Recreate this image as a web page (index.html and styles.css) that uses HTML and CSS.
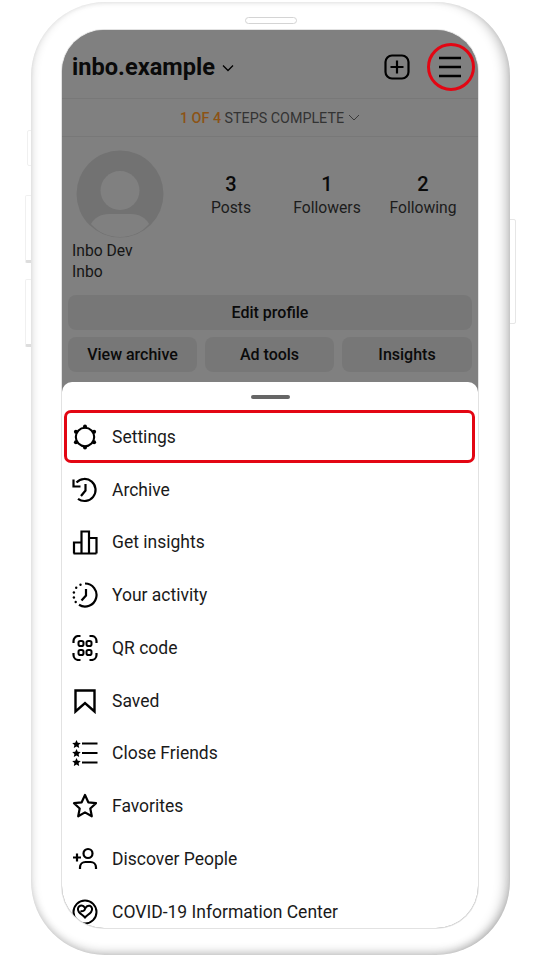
FILE: index.html
```html
<!DOCTYPE html>
<html lang="en">
<head>
    <meta charset="UTF-8">
    <meta name="viewport" content="width=device-width, initial-scale=1.0">
    <title>Profile menu</title>
    <link rel="stylesheet" href="styles.css">
</head>
<body>
    <div class="phone">
        <span class="side-btn mute"></span>
        <span class="side-btn vol-up"></span>
        <span class="side-btn vol-down"></span>
        <span class="side-btn power"></span>
        <span class="speaker"></span>

        <div class="screen">
            <div class="profile">
                <div class="topbar">
                    <div class="username">inbo.example
                        <svg class="caret" width="14" height="8" viewBox="0 0 14 8"><path d="M2 1.500l5 5 5-5" fill="none" stroke="#000" stroke-width="1.300"/></svg>
                    </div>
                    <div class="topbar-icons">
                        <svg width="28" height="28" viewBox="0 0 28 28" fill="none" stroke="#000" stroke-width="2.200">
                            <rect x="2.500" y="2.500" width="23" height="23" rx="6.500"/>
                            <path d="M14 7.500v13M7.500 14h13"/>
                        </svg>
                        <svg class="burger" width="24" height="22" viewBox="0 0 24 22" fill="none" stroke="#000" stroke-width="2.400">
                            <path d="M1 2h22M1 11h22M1 20h22"/>
                        </svg>
                    </div>
                </div>

                <div class="steps">
                    <span><span class="steps-done">1 OF 4</span> STEPS COMPLETE</span>
                    <svg width="12" height="7" viewBox="0 0 12 7"><path d="M1 1l5 5 5-5" fill="none" stroke="#3a3a3a" stroke-width="1"/></svg>
                </div>

                <div class="summary">
                    <svg class="avatar" width="88" height="88" viewBox="0 0 88 88">
                        <circle cx="44" cy="44" r="43.500" fill="#727272"/>
                        <circle cx="44" cy="40.500" r="19.500" fill="#808080"/>
                        <path d="M15 74c3-6 10-10 18-10h22c8 0 15 4 18 10-7 8-17 13-29 13s-22-5-29-13z" fill="#808080"/>
                    </svg>
                    <div class="stats">
                        <div class="stat"><b>3</b><span>Posts</span></div>
                        <div class="stat"><b>1</b><span>Followers</span></div>
                        <div class="stat"><b>2</b><span>Following</span></div>
                    </div>
                </div>

                <div class="bio">
                    <div>Inbo Dev</div>
                    <div>Inbo</div>
                </div>

                <div class="actions">
                    <div class="action wide">Edit profile</div>
                    <div class="action">View archive</div>
                    <div class="action">Ad tools</div>
                    <div class="action">Insights</div>
                </div>
            </div>

            <div class="sheet">
                <div class="handle"></div>

                <div class="menu-row">
                    <svg width="26" height="26" viewBox="0 0 26 26" fill="none" stroke="#000" stroke-width="2.100">
                        <circle cx="13" cy="13" r="9.200"/>
                        <g fill="#000" stroke="none">
                            <circle cx="13" cy="2.500" r="2"/><circle cx="13" cy="23.500" r="2"/>
                            <circle cx="3.900" cy="7.750" r="2"/><circle cx="22.100" cy="7.750" r="2"/>
                            <circle cx="3.900" cy="18.250" r="2"/><circle cx="22.100" cy="18.250" r="2"/>
                        </g>
                    </svg>
                    <span>Settings</span>
                </div>
                <div class="menu-row">
                    <svg width="26" height="26" viewBox="0 0 26 26" fill="none" stroke="#000" stroke-width="2.200">
                        <path d="M4.500 5.500A11 11 0 1 1 6 21.800"/>
                        <path d="M1.500 2.500v7H8.500"/>
                        <path d="M13.500 7v6.500L9 19"/>
                    </svg>
                    <span>Archive</span>
                </div>
                <div class="menu-row">
                    <svg width="26" height="26" viewBox="0 0 26 26" fill="none" stroke="#000" stroke-width="2.200">
                        <path d="M1.500 24.500h23M2 24.500v-11h7.500v11M9.500 24.500V2.500h7.500v22M17 24.500V9h7.500v15.500"/>
                    </svg>
                    <span>Get insights</span>
                </div>
                <div class="menu-row">
                    <svg width="26" height="26" viewBox="0 0 26 26" fill="none" stroke="#000" stroke-width="2.200">
                        <path d="M13 1.500a11.500 11.500 0 1 1-6 21.300"/>
                        <path d="M14 7v6.500L9.500 18.500"/>
                        <g fill="#000" stroke="none">
                            <circle cx="8.500" cy="2.800" r="1.200"/><circle cx="4.200" cy="5.800" r="1.200"/>
                            <circle cx="1.900" cy="10.500" r="1.200"/><circle cx="1.900" cy="15.500" r="1.200"/>
                            <circle cx="3.700" cy="20" r="1.200"/>
                        </g>
                    </svg>
                    <span>Your activity</span>
                </div>
                <div class="menu-row">
                    <svg width="26" height="26" viewBox="0 0 26 26" fill="none" stroke="#000" stroke-width="2">
                        <path d="M1.500 8V6a5 5 0 0 1 5-5h2M17.500 1h2a5 5 0 0 1 5 5v2M1.500 18v2a5 5 0 0 0 5 5h2M17.500 25h2a5 5 0 0 0 5-5v-2" stroke-width="2.200"/>
                        <rect x="6.500" y="6" width="5" height="5" rx="1.800"/>
                        <rect x="14.500" y="6" width="5" height="5" rx="1.800"/>
                        <rect x="6.500" y="15" width="5" height="5" rx="1.800"/>
                        <rect x="14.500" y="15" width="5" height="5" rx="1.800"/>
                    </svg>
                    <span>QR code</span>
                </div>
                <div class="menu-row">
                    <svg width="26" height="26" viewBox="0 0 26 26" fill="none" stroke="#000" stroke-width="2.400">
                        <path d="M3.500 2.500h19v21L13 15 3.500 23.500z"/>
                    </svg>
                    <span>Saved</span>
                </div>
                <div class="menu-row">
                    <svg width="26" height="26" viewBox="0 0 26 26" fill="none" stroke="#000" stroke-width="2.200">
                        <path d="M10 3.500h15.500M10 13h15.500M10 22.500h15.500"/>
                        <g fill="#000" stroke="none">
                            <path d="M4.500 0l1.300 2.700 3 .4-2.200 2 .6 3-2.700-1.500L1.800 8.100l.6-3-2.200-2 3-.4z"/>
                            <path d="M4.500 9l1.300 2.700 3 .4-2.200 2 .6 3-2.700-1.500-2.700 1.500.6-3-2.200-2 3-.4z"/>
                            <path d="M4.500 18l1.300 2.700 3 .4-2.200 2 .6 3-2.700-1.500-2.700 1.500.6-3-2.200-2 3-.4z"/>
                        </g>
                    </svg>
                    <span>Close Friends</span>
                </div>
                <div class="menu-row">
                    <svg width="26" height="26" viewBox="0 0 26 26" fill="none" stroke="#000" stroke-width="2.200" stroke-linejoin="round">
                        <path d="M13 2l3.300 7.300 7.700.9-5.700 5.300 1.500 7.800-6.800-3.900-6.800 3.900 1.500-7.800L2 10.200l7.700-.9z"/>
                    </svg>
                    <span>Favorites</span>
                </div>
                <div class="menu-row">
                    <svg width="26" height="26" viewBox="0 0 26 26" fill="none" stroke="#000" stroke-width="2.200">
                        <circle cx="16" cy="7.500" r="4.500"/>
                        <path d="M8 23v-1.500c0-3.500 2.500-5.500 5.500-5.500h5c3 0 5.500 2 5.500 5.500V23"/>
                        <path d="M1 11.500h8M5 7.500v8"/>
                    </svg>
                    <span>Discover People</span>
                </div>
                <div class="menu-row">
                    <svg width="26" height="26" viewBox="0 0 26 26" fill="none" stroke="#000" stroke-width="2">
                        <circle cx="13" cy="13" r="11.500"/>
                        <path d="M13 9c-1-1.800-3-2.800-4.800-2.200-2.400.9-3 3.800-1.400 6 1.500 2 4.200 3.500 6.200 5.700 2-2.200 4.700-3.700 6.200-5.700 1.600-2.200 1-5.100-1.400-6-2-.6-4.200 1-4.800 3.200-.4 1.600-2.400 2.600-4.500 2"/>
                    </svg>
                    <span>COVID-19 Information Center</span>
                </div>

                <div class="highlight"></div>
            </div>

            <div class="menu-ring"></div>
        </div>
    </div>
</body>
</html>
```

FILE: styles.css
```css
* {
    margin: 0;
    padding: 0;
    box-sizing: border-box;
    font-family: 'Roboto', 'Liberation Sans', sans-serif;
}

body {
    background: #fff;
    width: 540px;
    height: 960px;
    overflow: hidden;
    padding: 2px 0 0 31px;
}

.phone {
    position: relative;
    width: 479px;
    height: 953px;
    padding: 28px 32px 27px 31px;
    background: #fff;
    border-radius: 74px;
    box-shadow: inset 6px 0 10px -5px rgba(0, 0, 0, 0.14),
        inset -10px 0 12px -6px rgba(0, 0, 0, 0.26),
        inset 0 -8px 10px -5px rgba(0, 0, 0, 0.2),
        inset 0 2px 4px -1px rgba(0, 0, 0, 0.06);
}

.speaker {
    position: absolute;
    left: 214px;
    top: 15px;
    width: 52px;
    height: 7px;
    border: 1px solid #d4d4d4;
    border-radius: 4px;
}

.side-btn {
    position: absolute;
    background: #fff;
    border: 1px solid #f0f0f0;
    border-radius: 2px;
    z-index: -1;
}

.mute { left: -4px; top: 128px; width: 6px; height: 36px; }
.vol-up { left: -6px; top: 193px; width: 8px; height: 68px; border-bottom: 3px solid #ddd; }
.vol-down { left: -6px; top: 277px; width: 8px; height: 68px; border-bottom: 3px solid #ddd; }
.power { right: -6px; top: 217px; width: 8px; height: 105px; border-color: #e6e6e6; }

.screen {
    position: relative;
    height: 898px;
    display: flex;
    flex-direction: column;
    border-radius: 42px;
    overflow: hidden;
    background: #808080;
    box-shadow: 0 0 0 1px #e2e2e2;
}

.profile {
    height: 352px;
    flex-shrink: 0;
    background: #808080;
    color: #000;
}

.topbar {
    height: 69px;
    padding: 6px 16px 0 10px;
    display: flex;
    align-items: center;
    justify-content: space-between;
    border-bottom: 1px solid #787878;
}

.username {
    font-size: 23.600px;
    font-weight: 700;
    color: #0a0a0a;
    display: flex;
    align-items: center;
    gap: 6px;
}

.caret {
    margin-top: 1px;
}

.topbar-icons {
    display: flex;
    align-items: center;
    gap: 27px;
}

.steps {
    height: 38px;
    display: flex;
    align-items: center;
    justify-content: center;
    gap: 4px;
    font-size: 14.300px;
    color: #333;
    border-bottom: 1px solid #787878;
}

.steps-done {
    color: #8c5316;
    font-weight: 500;
}

.summary {
    display: flex;
    padding: 13px 0 0 14px;
}

.stats {
    display: flex;
    margin-left: 19px;
}

.stat {
    width: 96px;
    display: flex;
    flex-direction: column;
    align-items: center;
    padding-top: 22px;
    font-size: 15.700px;
    color: #1c1c1c;
}

.stat b {
    font-size: 20px;
    font-weight: 500;
    line-height: 24px;
    margin-bottom: 2px;
    color: #0a0a0a;
}

.bio {
    padding: 2px 0 0 10px;
    font-size: 15.700px;
    line-height: 21px;
    color: #151515;
}

.actions {
    display: grid;
    grid-template-columns: 129px 129px 130px;
    gap: 7px 8px;
    padding: 13px 6px 0;
}

.action {
    height: 35px;
    display: flex;
    align-items: center;
    justify-content: center;
    background: #777;
    border-radius: 8px;
    font-size: 16px;
    font-weight: 500;
    color: #0a0a0a;
}

.wide {
    grid-column: 1 / 4;
}

.sheet {
    position: relative;
    flex: 1;
    background: #fff;
    border-radius: 10px 10px 0 0;
    overflow: hidden;
    padding-top: 28.600px;
}

.handle {
    position: absolute;
    left: 189px;
    top: 13px;
    width: 39px;
    height: 4px;
    border-radius: 2px;
    background: #666;
}

.menu-row {
    height: 52.750px;
    padding-left: 10px;
    display: flex;
    align-items: center;
    gap: 14px;
    font-size: 17.500px;
    color: #1a1a1a;
    white-space: nowrap;
}

.menu-row svg {
    flex-shrink: 0;
}

.highlight {
    position: absolute;
    left: 2px;
    top: 28px;
    width: 411px;
    height: 53px;
    border: 3px solid #e30613;
    border-radius: 7px;
}

.menu-ring {
    position: absolute;
    left: 365px;
    top: 13px;
    width: 48px;
    height: 48px;
    border: 3px solid #e30613;
    border-radius: 50%;
}
```
